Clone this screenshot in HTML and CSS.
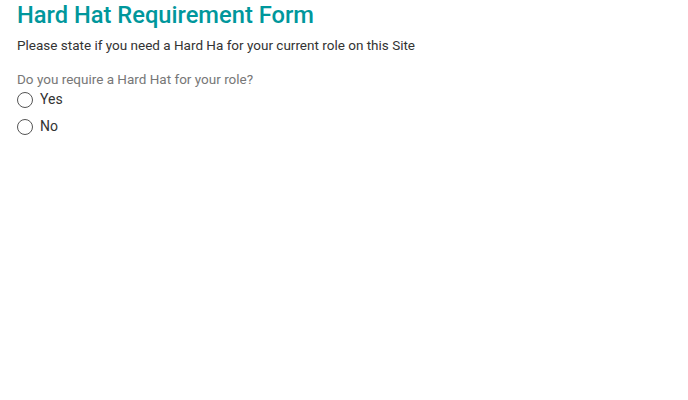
FILE: index.html
```html
<!DOCTYPE html>
<html>
<head>
<meta charset="utf-8">
<link rel="stylesheet" href="styles.css">
</head>
<body>
<div class="form">
  <h1 class="title">Hard Hat Requirement Form</h1>
  <p class="desc">Please state if you need a Hard Ha for your current role on this Site</p>
  <div class="question">
    <div class="label">Do you require a Hard Hat for your role?</div>
    <label class="option"><span class="radio"></span><span class="opt-text">Yes</span></label>
    <label class="option"><span class="radio"></span><span class="opt-text">No</span></label>
  </div>
</div>
</body>
</html>
```
FILE: styles.css
```css
html, body {
  margin: 0;
  padding: 0;
  background: #ffffff;
}
body {
  font-family: Roboto, "Liberation Sans", sans-serif;
}
.form {
  padding: 0 17px;
}
.title {
  margin: 0;
  padding-top: 1px;
  font-size: 23.7px;
  font-weight: 500;
  line-height: 28px;
  color: #00979c;
}
.desc {
  margin: 6px 0 0 0;
  font-size: 13.5px;
  line-height: 20px;
  color: #333333;
}
.question {
  margin-top: 15px;
}
.label {
  font-size: 13.5px;
  line-height: 18px;
  color: #777777;
}
.option {
  display: flex;
  align-items: center;
  height: 27px;
  margin-top: -3px;
}
.option + .option {
  margin-top: 0;
}
.radio {
  width: 14px;
  height: 14px;
  border: 1.4px solid #555;
  border-radius: 50%;
  box-sizing: content-box;
  flex: none;
  margin-top: 3px;
}
.opt-text {
  margin-left: 7px;
  font-size: 14px;
  color: #333333;
}
```
